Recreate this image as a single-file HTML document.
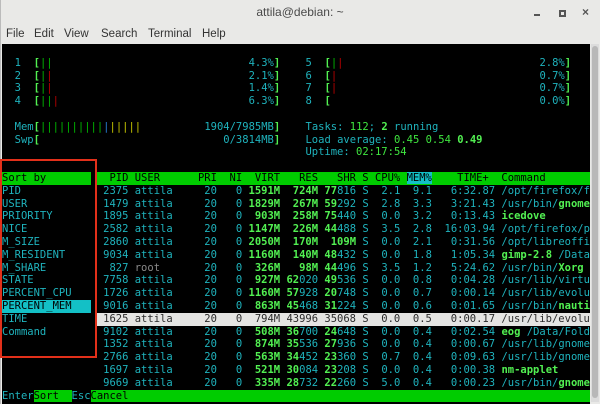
<!DOCTYPE html>
<html><head><meta charset="utf-8"><style>
*{margin:0;padding:0;box-sizing:border-box}
body{width:600px;height:404px;overflow:hidden;background:#e9e9e7;font-family:"Liberation Sans",sans-serif;position:relative}
.title{position:absolute;left:0;top:0;width:600px;height:24px;text-align:center;font-size:12px;line-height:24px;color:#4a4a4a}
.menu{position:absolute;left:0;top:24px;height:20px;font-size:11.5px;color:#333;line-height:20px}
.menu span{position:absolute;top:0;white-space:nowrap}
.term{position:absolute;left:2px;top:44px;width:588px;height:360px;background:#000;overflow:hidden}
.t{font-family:"DejaVu Sans Mono","Liberation Mono",monospace;font-size:10.5px;white-space:pre;line-height:12.8px}
.row{height:12.8px;position:absolute;left:0;white-space:pre}
.c{color:#1fb3bd}.g{color:#52f052;font-weight:bold}.gn{color:#3fe63f}.d{color:#00b800}.r{color:#b80000}.b{color:#2a7fd6}.y{color:#c8c800}.gr{color:#8a8a8a}
.sb{position:absolute;left:591px;top:44px;width:8px;height:358px;background:#dcdcdc}
.sb i{position:absolute;left:1px;top:2px;width:6px;height:352px;background:#b8b8b8;border-radius:3px}
</style></head><body>
<div class="title">attila@debian: ~</div>
<div style="position:absolute;left:534px;top:14px;width:6px;height:2px;background:#555"></div>
<div style="position:absolute;left:559px;top:10px;width:7px;height:7px;border:2px solid #555"></div>
<div style="position:absolute;left:582px;top:5px;font-size:12px;color:#555;font-weight:bold">×</div>
<div class="menu"><span style="left:6px">File</span><span style="left:34px">Edit</span><span style="left:64px">View</span><span style="left:101px">Search</span><span style="left:148px">Terminal</span><span style="left:202px">Help</span></div>
<div style="position:absolute;left:0;top:0;width:1px;height:404px;background:#bbb"></div>
<div class="term t">
<div class="row" style="top:12.8px">  <span class="c">1</span>  <span class="g">[</span><span class="d">||</span>                               <span class="c">4.3%</span><span class="g">]</span>    <span class="c">5</span>  <span class="g">[</span><span class="d">|</span><span class="r">|</span>                               <span class="c">2.8%</span><span class="g">]</span></div>
<div class="row" style="top:25.6px">  <span class="c">2</span>  <span class="g">[</span><span class="d">|</span><span class="r">|</span>                               <span class="c">2.1%</span><span class="g">]</span>    <span class="c">6</span>  <span class="g">[</span><span class="r">|</span>                                <span class="c">0.7%</span><span class="g">]</span></div>
<div class="row" style="top:38.4px">  <span class="c">3</span>  <span class="g">[</span><span class="d">|</span><span class="r">|</span>                               <span class="c">1.4%</span><span class="g">]</span>    <span class="c">7</span>  <span class="g">[</span><span class="r">|</span>                                <span class="c">0.7%</span><span class="g">]</span></div>
<div class="row" style="top:51.2px">  <span class="c">4</span>  <span class="g">[</span><span class="d">||</span><span class="r">|</span>                              <span class="c">6.3%</span><span class="g">]</span>    <span class="c">8</span>  <span class="g">[</span>                                 <span class="c">0.0%</span><span class="g">]</span></div>
<div class="row" style="top:76.8px">  <span class="c">Mem</span><span class="g">[</span><span class="d">||||||||||</span><span class="b">|</span><span class="y">|||||</span>          <span class="c">1904/7985MB</span><span class="g">]</span>    <span class="c">Tasks: </span><span class="gn">112</span><span class="c">; </span><span class="g">2</span><span class="c"> running</span></div>
<div class="row" style="top:89.6px">  <span class="c">Swp</span><span class="g">[</span>                             <span class="c">0/3814MB</span><span class="g">]</span>    <span class="c">Load average: </span><span class="gn">0.45 0.54 </span><span class="g">0.49</span></div>
<div class="row" style="top:102.4px">                                                <span class="c">Uptime: </span><span class="gn">02:17:54</span></div>

<div class="row" style="top:128px"><span style="background:#00cc00;color:#000;display:inline-block;width:88.5px">Sort by</span></div>
<div class="row c" style="top:140.8px">PID</div>
<div class="row c" style="top:153.6px">USER</div>
<div class="row c" style="top:166.4px">PRIORITY</div>
<div class="row c" style="top:179.2px">NICE</div>
<div class="row c" style="top:192px">M_SIZE</div>
<div class="row c" style="top:204.8px">M_RESIDENT</div>
<div class="row c" style="top:217.6px">M_SHARE</div>
<div class="row c" style="top:230.4px">STATE</div>
<div class="row c" style="top:243.2px">PERCENT_CPU</div>
<div class="row" style="top:256px"><span style="background:#13c0c6;color:#000;display:inline-block;width:88.5px">PERCENT_MEM</span></div>
<div class="row c" style="top:268.8px">TIME</div>
<div class="row c" style="top:281.6px">Command</div>

<div style="position:absolute;left:94.8px;top:128px;width:494px;height:217.6px;overflow:hidden" class="c">
<div class="row" style="top:0;width:494px;background:#00cc00;color:#000">  PID USER      PRI  NI  VIRT   RES   SHR S CPU% <span style="background:#13c0c6">MEM%</span>    TIME+  Command</div>
<div class="row" style="top:12.8px"> 2375 attila     20   0 <span class="g">1591M</span>  <span class="g">724M</span> <span class="g">77</span>816 S  2.1  9.1   6:32.87 /opt/firefox/firefox</div>
<div class="row" style="top:25.6px"> 1479 attila     20   0 <span class="g">1829M</span>  <span class="g">267M</span> <span class="g">59</span>292 S  2.8  3.3   3:21.43 /usr/bin/<span class="g">gnome-shell</span></div>
<div class="row" style="top:38.4px"> 1895 attila     20   0  <span class="g">903M</span>  <span class="g">258M</span> <span class="g">75</span>440 S  0.0  3.2   0:13.43 <span class="g">icedove</span></div>
<div class="row" style="top:51.2px"> 2582 attila     20   0 <span class="g">1147M</span>  <span class="g">226M</span> <span class="g">44</span>488 S  3.5  2.8  16:03.94 /opt/firefox/plugin</div>
<div class="row" style="top:64px"> 2860 attila     20   0 <span class="g">2050M</span>  <span class="g">170M</span>  <span class="g">109M</span> S  0.0  2.1   0:31.56 /opt/libreoffice</div>
<div class="row" style="top:76.8px"> 9034 attila     20   0 <span class="g">1160M</span>  <span class="g">140M</span> <span class="g">48</span>432 S  0.0  1.8   1:05.34 <span class="g">gimp-2.8</span> /Data</div>
<div class="row" style="top:89.6px">  827 <span class="gr">root</span>       20   0  <span class="g">326M</span>   <span class="g">98M</span> <span class="g">44</span>496 S  3.5  1.2   5:24.62 /usr/bin/<span class="g">Xorg</span></div>
<div class="row" style="top:102.4px"> 7758 attila     20   0  <span class="g">927M</span> <span class="g">62</span>020 <span class="g">49</span>536 S  0.0  0.8   0:04.28 /usr/lib/virtualbox</div>
<div class="row" style="top:115.2px"> 1726 attila     20   0 <span class="g">1160M</span> <span class="g">57</span>928 <span class="g">20</span>748 S  0.0  0.7   0:00.14 /usr/lib/evolution</div>
<div class="row" style="top:128px"> 9016 attila     20   0  <span class="g">863M</span> <span class="g">45</span>468 <span class="g">31</span>224 S  0.0  0.6   0:01.65 /usr/bin/<span class="g">nautilus</span></div>
<div class="row" style="top:140.8px;width:494px;background:#e4e4e2;color:#2a2a2a"> 1625 attila     20   0  794M 43996 35068 S  0.0  0.5   0:00.17 /usr/lib/evolution</div>
<div class="row" style="top:153.6px"> 9102 attila     20   0  <span class="g">508M</span> <span class="g">36</span>700 <span class="g">24</span>648 S  0.0  0.4   0:02.54 <span class="g">eog</span> /Data/Folder</div>
<div class="row" style="top:166.4px"> 1352 attila     20   0  <span class="g">874M</span> <span class="g">35</span>536 <span class="g">27</span>936 S  0.0  0.4   0:00.67 /usr/lib/gnome</div>
<div class="row" style="top:179.2px"> 2766 attila     20   0  <span class="g">563M</span> <span class="g">34</span>452 <span class="g">23</span>360 S  0.7  0.4   0:09.63 /usr/lib/gnome</div>
<div class="row" style="top:192px"> 1697 attila     20   0  <span class="g">521M</span> <span class="g">30</span>084 <span class="g">23</span>208 S  0.0  0.4   0:00.38 <span class="g">nm-applet</span></div>
<div class="row" style="top:204.8px"> 9669 attila     20   0  <span class="g">335M</span> <span class="g">28</span>732 <span class="g">22</span>260 S  5.0  0.4   0:00.23 /usr/bin/<span class="g">gnome-shell</span></div>
</div>

<div class="row" style="top:345.6px;width:588px"><span class="c">Enter</span><span style="background:#00cc00;color:#000">Sort  </span><span class="c">Esc</span><span style="background:#00cc00;color:#000;display:inline-block;width:502px">Cancel</span></div>
</div>
<div style="position:absolute;left:0;top:159px;width:97px;height:199px;border:2px solid #e2301a"></div>
<div class="sb"><i></i></div>
</body></html>
